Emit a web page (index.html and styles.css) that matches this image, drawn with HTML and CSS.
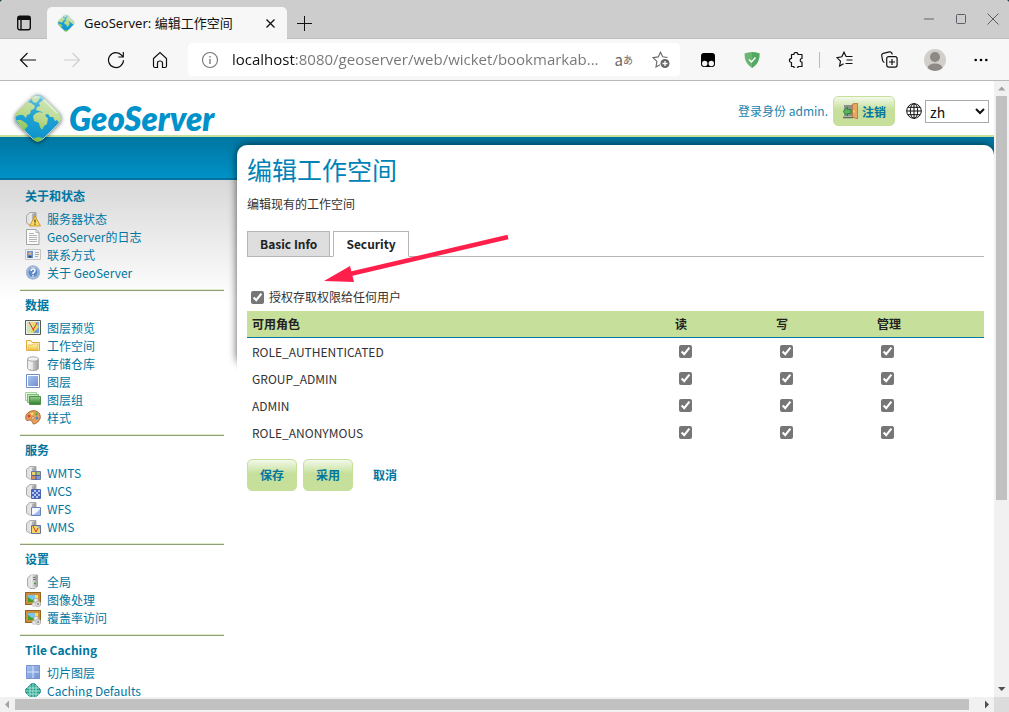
FILE: index.html
```html
<!DOCTYPE html>
<html lang="zh">
<head>
<meta charset="utf-8">
<title>GeoServer: 编辑工作空间</title>
<link rel="stylesheet" href="styles.css">
</head>
<body>
<svg class="defs" aria-hidden="true">
  <defs>
    <linearGradient id="gGlobe" x1="0" y1="0" x2="0" y2="1"><stop offset="0" stop-color="#6cc2e2"/><stop offset=".4" stop-color="#22a2d5"/><stop offset="1" stop-color="#0b93cb"/></linearGradient>
    <linearGradient id="gLand" gradientUnits="userSpaceOnUse" x1="30" y1="4" x2="16" y2="46"><stop offset="0" stop-color="#cfe6bd"/><stop offset=".5" stop-color="#b9d98a"/><stop offset="1" stop-color="#76bd3f"/></linearGradient>
    <linearGradient id="gGray" x1="0" y1="0" x2="1" y2="0"><stop offset="0" stop-color="#f4f4f4"/><stop offset="1" stop-color="#9a9a9a"/></linearGradient>
    <linearGradient id="gBlue" x1="0" y1="0" x2="1" y2="1"><stop offset="0" stop-color="#a9c2ee"/><stop offset="1" stop-color="#6f90d2"/></linearGradient>
    <linearGradient id="gGreen" x1="0" y1="0" x2="0" y2="1"><stop offset="0" stop-color="#9bd08f"/><stop offset="1" stop-color="#2d7f2b"/></linearGradient>
    <linearGradient id="gFolder" x1="0" y1="0" x2="0" y2="1"><stop offset="0" stop-color="#fff3b0"/><stop offset="1" stop-color="#f0c336"/></linearGradient>
  </defs>
  <symbol id="globe" viewBox="0 0 50 50">
    <path d="M20 4q5-4 10 0L46 20q4 5 0 10L30 46q-5 4-10 0L4 30q-4-5 0-10z" fill="url(#gGlobe)" stroke="#a9cfd2" stroke-width="1"/>
    <path d="M3 20L14 9l4 1 4 3-1 3-3 1-1 4-3 1-1 3-3-3-4 0-4 2zM18 5l4-2 5 1-1 3-3 3-3-1zM3 27l5 0 5 3 2 3-3 3-1 2zM20 23l3-3 4-1 5 2 1 3 2 1-1 6-3 2-2 4-2-3-1-4-5-2zM23 17l1-3 3-1-1-3 4-3 2-1 14 14q2 3 2 6l-2 4-2-3-2 1-2-4-3 0-2-3-4 1-2-3-3-1zM19 46l6-2 5 1-3 3-3 1z" fill="url(#gLand)"/>
    <path d="M21 5q4-3 8 0l15 15" fill="none" stroke="#fff" stroke-opacity=".5" stroke-width="1.500"/>
  </symbol>
  <symbol id="server" viewBox="0 0 16 16">
    <path d="M1.500 4.500L5 1.500h6v9.500l-3 3H4.500l-3-2z" fill="#e2e2e2" stroke="#999" stroke-width=".8"/>
    <path d="M5.500 2H11v12H5.500z" fill="url(#gGray)"/><path d="M7 4h3M7 6h3M7 8h3" stroke="#888" stroke-width=".8"/>
  </symbol>
  <symbol id="image" viewBox="0 0 16 16">
    <path d="M0 0h16v13H0z" fill="#c98f3f"/><path d="M.5.5h15v12H.5z" fill="none" stroke="#94611f"/><path d="M3 3h10v7H3z" fill="#79c4ed"/><path d="M3 10V5l4 3 2-1 4 3z" fill="#43a22d"/><path d="M10 3h3v3h-3z" fill="#ffdf4a"/>
    <circle cx="11" cy="8.500" r="2.300" fill="#e6e6e6" stroke="#aaa" stroke-width=".7"/><circle cx="13" cy="12" r="2.800" fill="#ddd" stroke="#aaa" stroke-width=".7"/><circle cx="9" cy="12.500" r="2" fill="#e6e6e6" stroke="#bbb" stroke-width=".6"/><circle cx="13" cy="12" r="1" fill="#888"/>
  </symbol>
</svg>

<div class="window">
  <header class="titlebar">
    <button class="icon-btn tabs-btn" aria-label="Tab actions"><svg width="16" height="16" viewBox="0 0 16 16"><path d="M1.700 4V3.200A2 2 0 0 1 3.700 1.200h8.600a2 2 0 0 1 2 2v9.600a2 2 0 0 1-2 2H3.700a2 2 0 0 1-2-2z M5 4v11" fill="none" stroke="#111" stroke-width="1.400"/><path d="M2 1.500h12v3.500H2z" fill="#111"/></svg></button>
    <div class="browser-tab">
      <svg width="18" height="18"><use href="#globe"/></svg>
      <span class="browser-tab-title">GeoServer: 编辑工作空间</span>
      <button class="icon-btn" aria-label="Close tab"><svg width="11" height="11" viewBox="0 0 11 11"><path d="M1.500 1.500l8 8m0-8l-8 8" stroke="#111" stroke-width="1.300"/></svg></button>
    </div>
    <button class="icon-btn new-tab" aria-label="New tab"><svg width="15" height="15" viewBox="0 0 15 15"><path d="M7.500 0v15M0 7.500h15" stroke="#111"/></svg></button>
    <div class="window-controls">
      <button class="icon-btn" aria-label="Minimize"><svg width="12" height="12" viewBox="0 0 12 12"><path d="M1 6h10" stroke="#96989c" stroke-width="2"/></svg></button>
      <button class="icon-btn" aria-label="Maximize"><svg width="12" height="12" viewBox="0 0 12 12"><rect x="1.500" y="1.500" width="9" height="9" rx="1" fill="none" stroke="#5c5e66"/></svg></button>
      <button class="icon-btn" aria-label="Close"><svg width="12" height="12" viewBox="0 0 12 12"><path d="M.5.5l11 11m0-11l-11 11" stroke="#5c5e66"/></svg></button>
    </div>
  </header>

  <nav class="toolbar">
    <div class="nav-buttons">
      <button class="icon-btn" aria-label="Back"><svg width="18" height="18" viewBox="0 0 18 18"><path d="M17 9H1.500M8.500 2L1.500 9l7 7" fill="none" stroke="#111" stroke-width="1.200"/></svg></button>
      <button class="icon-btn" aria-label="Forward"><svg width="18" height="18" viewBox="0 0 18 18"><path d="M1 9h15.500M9.500 2l7 7-7 7" fill="none" stroke="#cfcfcf" stroke-width="1.200"/></svg></button>
      <button class="icon-btn" aria-label="Reload"><svg width="18" height="18" viewBox="0 0 18 18"><path d="M16.500 9.300A7.500 7.500 0 1 1 14.800 4.300L16 6M16.300 1v5h-5" fill="none" stroke="#111" stroke-width="1.200"/></svg></button>
      <button class="icon-btn" aria-label="Home"><svg width="18" height="18" viewBox="0 0 18 18"><path d="M2.500 7.500L9 1.500l6.500 6V15q0 1.500-1.500 1.500h-2.500V12q0-2-2.500-2t-2.500 2v4.500H4Q2.500 16.500 2.500 15z" fill="none" stroke="#111" stroke-width="1.200"/></svg></button>
    </div>
    <div class="address">
      <svg width="18" height="18" viewBox="0 0 18 18"><circle cx="9" cy="9" r="7.500" fill="none" stroke="#737373" stroke-width="1.100"/><path d="M9 8v5M9 5v1.400" stroke="#737373" stroke-width="1.300"/></svg>
      <input class="url" type="text" aria-label="Address" value="localhost:8080/geoserver/web/wicket/bookmarkab...">
      <button class="icon-btn translate" aria-label="Translate"><span class="translate-a">a</span><span class="translate-b">あ</span></button>
      <button class="icon-btn" aria-label="Add favorite"><svg width="18" height="18" viewBox="0 0 18 18"><path d="M15.500 6.500l-4.800-.7L8.500 1.200 6.200 5.900 1 6.700l3.900 3.700L4 16l4-2.200" fill="none" stroke="#666" stroke-width="1.100"/><circle cx="13" cy="12.500" r="4.500" fill="#666"/><path d="M13 10v5M10.500 12.500h5" stroke="#fff" stroke-width="1.300"/></svg></button>
    </div>
    <div class="extensions">
      <button class="icon-btn" aria-label="Tampermonkey"><svg width="16" height="16" viewBox="0 0 16 16"><rect x="1" y="1" width="14" height="14" rx="3" fill="#000"/><circle cx="4.700" cy="11.500" r="2.700" fill="#f5f5f5"/><circle cx="11.300" cy="11.500" r="2.700" fill="#f5f5f5"/></svg></button>
      <button class="icon-btn" aria-label="AdGuard"><svg width="16" height="16" viewBox="0 0 16 16"><path d="M8 0q4 0 7.500 1.500Q16 11 8 16 0 11 .5 1.500 4 0 8 0z" fill="#6ab574"/><path d="M8 0q4 0 7.500 1.500Q16 11 8 16z" fill="#55a861"/><path d="M5 7.500l2.500 2.500L11.500 5.500" fill="none" stroke="#fff" stroke-width="1.400"/></svg></button>
      <button class="icon-btn" aria-label="Extensions"><svg width="16" height="16" viewBox="0 0 16 16"><path d="M3.500 2.500h2.300a2.100 2.100 0 0 1 4.200 0h4v4a1.800 1.800 0 1 0 0 3.600v4.400h-4a2.100 2.100 0 0 1-4.200 0H3.500v-4a2.100 2.100 0 0 1 0-4.200z" fill="none" stroke="#111" stroke-width="1.200" stroke-linejoin="round"/></svg></button>
      <span class="divider"></span>
      <button class="icon-btn" aria-label="Favorites"><svg width="17" height="17" viewBox="0 0 17 17"><path d="M10 5.500L8 1.200 5.800 5.800.9 6.600l3.600 3.500L3.600 15l4-2.200M10 5.500h6.500M10.500 9h6M9.500 12.500h7" fill="none" stroke="#111" stroke-width="1.200"/></svg></button>
      <button class="icon-btn" aria-label="Collections"><svg width="17" height="17" viewBox="0 0 17 17"><rect x="5.700" y="5.700" width="10.400" height="10.400" rx="2" fill="none" stroke="#111" stroke-width="1.200"/><path d="M11 8v6M8 11h6M3.500 11.500Q1.800 11 1.500 9L.7 4.500q-.2-1.700 1.500-2.200L8.500.8q1.700-.2 2.300 1.200l.5 1.500" fill="none" stroke="#111" stroke-width="1.200"/></svg></button>
      <button class="icon-btn profile" aria-label="Profile"><svg width="22" height="22" viewBox="0 0 22 22"><circle cx="11" cy="11" r="11" fill="#d2cfcb"/><circle cx="11" cy="8" r="5" fill="#8d8986"/><path d="M3.500 19q1-4.500 7.500-4.500t7.500 4.500A11 11 0 0 1 3.500 19z" fill="#8d8986"/></svg></button>
      <button class="icon-btn" aria-label="Menu"><svg width="14" height="4" viewBox="0 0 14 4"><circle cx="1.700" cy="2" r="1.300"/><circle cx="7" cy="2" r="1.300"/><circle cx="12.300" cy="2" r="1.300"/></svg></button>
    </div>
  </nav>

  <div class="viewport">
    <div class="page">
      <div class="page-header">
        <a class="logo" href="#"><svg class="logo-globe" width="50" height="50"><use href="#globe"/></svg><span class="logo-text">GeoServer</span></a>
        <div class="session">
          <span class="login-as">登录身份 admin.</span>
          <button class="btn logout"><svg width="16" height="16" viewBox="0 0 16 16"><path d="M2 2h8v11H2z" fill="#8b8f8f"/><path d="M1 14.500h10" stroke="#666" stroke-width="1.500"/><path d="M10.500 1l5-1v16l-5-2z" fill="#e6a765" stroke="#b06f35" stroke-width=".8"/><path d="M12 7.500v2" stroke="#ffe169" stroke-width="1.500"/><path d="M9 6.500v4H5.500v2.300L1 8.500l4.500-4.300v2.300z" fill="#58b35a" stroke="#247c32" stroke-width=".8"/></svg>注销</button>
          <svg class="lang-icon" width="16" height="16" viewBox="0 0 16 16"><g fill="none" stroke="#111" stroke-width="1"><circle cx="8" cy="8" r="7.300"/><ellipse cx="8" cy="8" rx="3.700" ry="7.300"/><path d="M8 .7v14.600M.7 8h14.600M2 4.300h12M2 11.700h12"/></g></svg>
          <select class="lang" aria-label="Language"><option>zh</option></select>
        </div>
      </div>
      <div class="page-body">
        <aside class="sidebar">
          <section class="group"><h3>关于和状态</h3><ul>
            <li><a href="#"><svg width="16" height="16" viewBox="0 0 16 16"><use href="#server"/><path d="M10 5l5.500 10h-11z" fill="#fbd75b" stroke="#c98d14" stroke-width=".8"/><path d="M10 8.500v3M10 12.500v1.200" stroke="#333" stroke-width="1.200"/></svg>服务器状态</a></li>
            <li><a href="#"><svg width="16" height="16" viewBox="0 0 16 16"><path d="M1.500.5h9.500l3 3v12H1.500z" fill="#fafafa" stroke="#a5a5a5"/><path d="M11 .5v3h3M4 4.500h5M4 6.500h8M4 8.500h8M4 10.500h8M4 12.500h8" fill="none" stroke="#b5b5b5"/></svg>GeoServer的日志</a></li>
            <li><a href="#"><svg width="16" height="16" viewBox="0 0 16 16"><path d="M.5 2.500h15v10H.5z" fill="#f2f2f2" stroke="#c5c5c5"/><path d="M2 4h6v7H2z" fill="#6b95cc"/><circle cx="5" cy="6.500" r="1.500" fill="#e9b37c"/><path d="M3 10.500q2-4 4 0z" fill="#25406b"/><path d="M10 5.500h4M10 7.500h4M10 9.500h3" stroke="#aaa"/></svg>联系方式</a></li>
            <li><a href="#"><svg width="16" height="16" viewBox="0 0 16 16"><circle cx="8" cy="7.500" r="6.600" fill="#5f8ac6" stroke="#a7b9d4" stroke-width="1.200"/><circle cx="8" cy="7.500" r="5.200" fill="none" stroke="#dce8f7" stroke-width=".8"/><path d="M6 6q0-2 2-2t2 1.700Q10 7 8 8v1M8 10v1.500" fill="none" stroke="#fff" stroke-width="1.400"/></svg>关于 GeoServer</a></li>
          </ul></section>
          <section class="group"><h3>数据</h3><ul>
            <li><a href="#"><svg width="16" height="16" viewBox="0 0 16 16"><path d="M.5.5h15v14H.5z" fill="#eee" stroke="#555b50"/><path d="M2 2h12v11H2z" fill="#f0d865"/><path d="M2 2h4l2 4-3 7H2z" fill="#cde4ae"/><path d="M10 2h4v5z" fill="#7cb0dc"/><path d="M8 13l6-6v6z" fill="#6aa0d8"/><path d="M4 2l5 9M8 10l4-7" fill="none" stroke="#d8372e" stroke-width="1"/></svg>图层预览</a></li>
            <li><a href="#"><svg width="16" height="16" viewBox="0 0 16 16"><path d="M1.500 12.500v-10H6l1 2h7.500v8z" fill="#fff7cf" stroke="#e0a73c"/><path d="M3 12V7h4l1-1h5v6z" fill="url(#gFolder)" stroke="#e8bb55" stroke-width=".8"/></svg>工作空间</a></li>
            <li><a href="#"><svg width="16" height="16" viewBox="0 0 16 16"><path d="M2.500 3v9.500q0 2 5.500 2t5.500-2V3" fill="url(#gGray)" stroke="#aaa"/><path d="M5 5v8M7 5v9" stroke="#fff"/><ellipse cx="8" cy="3" rx="5.500" ry="2.200" fill="#f2f2f2" stroke="#aaa"/></svg>存储仓库</a></li>
            <li><a href="#"><svg width="16" height="16" viewBox="0 0 16 16"><path d="M1.500.5h13v13h-13z" fill="#fff" stroke="#6f8fca"/><path d="M3 2h10v10H3z" fill="url(#gBlue)"/></svg>图层</a></li>
            <li><a href="#"><svg width="16" height="16" viewBox="0 0 16 16"><path d="M.5.500h11v8H.5z" fill="#e4f3df" stroke="#a3d19e"/><path d="M2.500 2.500h11v8h-11z" fill="#bfe1b8" stroke="#7dbb77"/><path d="M4.500 4.500h11v8h-11z" fill="url(#gGreen)" stroke="#4c9349"/></svg>图层组</a></li>
            <li><a href="#"><svg width="16" height="16" viewBox="0 0 16 16"><path d="M1 9.500Q-.5 4 5 1.500t9.500 2Q17 9 12 12.500q-4 3-4.500 0T4 10q-2.500 1.500-3-.5z" fill="#e2a15f" stroke="#aa6328" stroke-width=".9"/><circle cx="4" cy="6" r="1.500" fill="#e53e31"/><circle cx="7" cy="3.700" r="1.300" fill="#f4e65c"/><circle cx="11.500" cy="4" r="1.500" fill="#51b94a"/><circle cx="12" cy="8" r="1.500" fill="#4d86d6"/><circle cx="8" cy="8" r="1.300" fill="#fff" stroke="#aa6328" stroke-width=".7"/></svg>样式</a></li>
          </ul></section>
          <section class="group"><h3>服务</h3><ul>
            <li><a href="#"><svg width="16" height="16" viewBox="0 0 16 16"><use href="#server"/><path d="M6.500 6.500h9v8h-9z" fill="#fff" stroke="#6b78a8"/><path d="M7 7h4v3H7z" fill="#ecd26a"/><path d="M11 7h4v3h-4z" fill="#a4c26a"/><path d="M7 10h4v4H7z" fill="#d98a5b"/><path d="M11 10h4v4h-4z" fill="#7d9ad6"/><path d="M11 7v8M7 10.500h8" stroke="#4c5a95"/></svg>WMTS</a></li>
            <li><a href="#"><svg width="16" height="16" viewBox="0 0 16 16"><use href="#server"/><path d="M6.500 6.500h9v9h-9z" fill="#b3c4ee" stroke="#4b64b2"/><path d="M7 7h2v2H7zM11 7h2v2h-2zM9 9h2v2H9zM13 9h2v2h-2zM7 11h2v2H7zM11 11h2v2h-2zM9 13h2v2H9zM13 13h2v2h-2z" fill="#4764bb"/></svg>WCS</a></li>
            <li><a href="#"><svg width="16" height="16" viewBox="0 0 16 16"><use href="#server"/><path d="M6.500 6.500h9v8h-9z" fill="#f5f8ff" stroke="#6780c2"/><path d="M7 14q4-1 8-6v6z" fill="#9db8ea"/></svg>WFS</a></li>
            <li><a href="#"><svg width="16" height="16" viewBox="0 0 16 16"><use href="#server"/><path d="M6.500 6.500h9v8h-9z" fill="#f2da68" stroke="#6b6f9b"/><path d="M12 7h3v3z" fill="#7cb0dc"/><path d="M8 7l3 6 2-4" fill="none" stroke="#d8372e"/></svg>WMS</a></li>
          </ul></section>
          <section class="group"><h3>设置</h3><ul>
            <li><a href="#"><svg width="16" height="16" viewBox="0 0 16 16"><path d="M2.500 4L6 1h6.500v11L10 14.500H5L2.500 12z" fill="#e4e4e4" stroke="#999" stroke-width=".8"/><path d="M6 1h6.500v12H6z" fill="url(#gGray)"/><path d="M8 3.500h3M8 5.500h3" stroke="#777"/><path d="M9 9.500h2" stroke="#39a23e" stroke-width="1.500"/></svg>全局</a></li>
            <li><a href="#"><svg width="16" height="16"><use href="#image"/></svg>图像处理</a></li>
            <li><a href="#"><svg width="16" height="16"><use href="#image"/></svg>覆盖率访问</a></li>
          </ul></section>
          <section class="group"><h3>Tile Caching</h3><ul>
            <li><a href="#"><svg width="16" height="16" viewBox="0 0 16 16"><path d="M1 0h14v14H1z" fill="url(#gBlue)"/><path d="M8 0v14M1 7h14" stroke="#dce6fa" stroke-width="1"/><path d="M1.500.5h13v13h-13z" fill="none" stroke="#7896d6"/></svg>切片图层</a></li>
            <li><a href="#"><svg width="16" height="16" viewBox="0 0 16 16"><path d="M6 1q2-1.500 4 0l5 5q1.500 2 0 4l-5 5q-2 1.500-4 0l-5-5q-1.500-2 0-4z" fill="#23a394" stroke="#168a83" stroke-width=".8"/><path d="M5 2v12M8 .5v15M11 2v12M2 5h12M.5 8h15M2 11h12" stroke="#c9ecd9" stroke-width=".8"/></svg>Caching Defaults</a></li>
          </ul></section>
        </aside>

        <main class="content">
          <h1>编辑工作空间</h1>
          <p class="description">编辑现有的工作空间</p>
          <div class="tabs" role="tablist">
            <button class="tab" role="tab">Basic Info</button>
            <button class="tab tab-active" role="tab" aria-selected="true">Security</button>
          </div>
          <label class="grant"><input class="check" type="checkbox" checked><span>授权存取权限给任何用户</span></label>
          <table class="roles">
            <thead><tr><th>可用角色</th><th class="col-access">读</th><th class="col-access">写</th><th class="col-admin">管理</th></tr></thead>
            <tbody>
              <tr><td>ROLE_AUTHENTICATED</td><td><input class="check" type="checkbox" checked aria-label="ROLE_AUTHENTICATED 读"></td><td><input class="check" type="checkbox" checked aria-label="ROLE_AUTHENTICATED 写"></td><td><input class="check" type="checkbox" checked aria-label="ROLE_AUTHENTICATED 管理"></td></tr>
              <tr><td>GROUP_ADMIN</td><td><input class="check" type="checkbox" checked aria-label="GROUP_ADMIN 读"></td><td><input class="check" type="checkbox" checked aria-label="GROUP_ADMIN 写"></td><td><input class="check" type="checkbox" checked aria-label="GROUP_ADMIN 管理"></td></tr>
              <tr><td>ADMIN</td><td><input class="check" type="checkbox" checked aria-label="ADMIN 读"></td><td><input class="check" type="checkbox" checked aria-label="ADMIN 写"></td><td><input class="check" type="checkbox" checked aria-label="ADMIN 管理"></td></tr>
              <tr><td>ROLE_ANONYMOUS</td><td><input class="check" type="checkbox" checked aria-label="ROLE_ANONYMOUS 读"></td><td><input class="check" type="checkbox" checked aria-label="ROLE_ANONYMOUS 写"></td><td><input class="check" type="checkbox" checked aria-label="ROLE_ANONYMOUS 管理"></td></tr>
            </tbody>
          </table>
          <div class="actions">
            <button class="btn">保存</button>
            <button class="btn">采用</button>
            <a class="cancel" href="#">取消</a>
          </div>
          <svg class="arrow" width="190" height="50" viewBox="0 0 190 50"><path d="M186 3L28 40" stroke="#ff1f4b" stroke-width="4.500"/><path d="M2 47l26-15 4 16z" fill="#ff1f4b"/></svg>
        </main>
      </div>
    </div>
    <div class="scroll-v">
      <svg width="15" height="15" viewBox="0 0 15 15"><path d="M4 9.500h7.500L7.700 5.500z" fill="#a3a3a3"/></svg>
      <div class="track"><div class="thumb"></div></div>
      <svg width="15" height="15" viewBox="0 0 15 15"><path d="M4 5h7.500L7.700 9z" fill="#505050"/></svg>
    </div>
    <div class="scroll-h">
      <svg width="15" height="15" viewBox="0 0 15 15"><path d="M9 3.500v8L5 7.500z" fill="#a3a3a3"/></svg>
      <div class="track"><div class="thumb"></div></div>
      <svg width="15" height="15" viewBox="0 0 15 15"><path d="M6 3.500v8l4-4z" fill="#505050"/></svg>
    </div>
    <div class="scroll-corner"></div>
  </div>
</div>
</body>
</html>
```

FILE: styles.css
```css
* { box-sizing: border-box; }

body {
  margin: 0;
  background: #1f4350;
  font-family: "Noto Sans CJK SC", "Noto Sans", sans-serif;
  font-size: 12px;
  line-height: 18px;
  color: #333;
}

svg { display: block; flex: none; }
.defs { position: absolute; width: 0; height: 0; }
a { color: #0076a1; text-decoration: none; }
h1, h3, p, ul { margin: 0; padding: 0; }
button { font-family: inherit; }

.window {
  display: flex;
  flex-direction: column;
  height: 100vh;
  overflow: hidden;
  border-radius: 4px 4px 0 0;
  background: #fff;
}

.icon-btn {
  display: flex;
  align-items: center;
  justify-content: center;
  padding: 0;
  border: 0;
  background: none;
  color: #666;
}

/* browser title bar */
.titlebar {
  display: flex;
  flex: none;
  align-items: center;
  height: 39px;
  background: #cdcdcd;
  border-bottom: 1px solid #bdbdbd;
}
.tabs-btn { padding: 8px 15px 0 16px; }
.browser-tab {
  display: flex;
  align-items: center;
  align-self: flex-end;
  gap: 9px;
  width: 240px;
  height: 32px;
  margin-bottom: -1px;
  padding: 0 11px 0 10px;
  border-radius: 5px 5px 0 0;
  background: #f7f7f7;
}
.browser-tab-title {
  flex: 1;
  font-family: "Noto Sans", "Noto Sans CJK SC", sans-serif;
  font-size: 13px;
  color: #111;
}
.new-tab { padding: 8px 10px 0; }
.window-controls {
  display: flex;
  gap: 20px;
  margin-left: auto;
  padding-right: 10px;
}

/* browser toolbar */
.toolbar {
  display: flex;
  flex: none;
  align-items: center;
  height: 42px;
  background: #f7f7f7;
  border-bottom: 1px solid #b9b9b9;
}
.nav-buttons { display: flex; gap: 26px; padding: 0 19px; }
.address {
  display: flex;
  flex: 1;
  align-items: center;
  height: 33px;
  gap: 13px;
  padding: 0 10px 0 13px;
  border-radius: 4px;
  background: #fff;
}
.url {
  flex: 1;
  min-width: 0;
  margin-right: -8px;
  padding: 0 0 2px;
  border: 0;
  font-family: "Open Sans", "Noto Sans", sans-serif;
  font-size: 15px;
  color: transparent;
  background: linear-gradient(to right, #111 63px, #757575 63px);
  background-clip: text;
}
.translate { margin-right: 6px; }
.translate-a { font-family: "Noto Sans CJK JP", sans-serif; font-size: 15px; }
.translate-b { font-family: "Noto Sans CJK JP", sans-serif; font-size: 10px; }
.extensions { display: flex; align-items: center; gap: 28px; padding: 0 21px 0 20px; }
.divider { width: 1px; height: 16px; margin: 0 -12px 0 -13px; background: #bbb; }
.profile { margin-left: -2px; }

/* scrolled page area */
.viewport {
  display: grid;
  flex: 1;
  min-height: 0;
  grid-template: minmax(0, 1fr) 15px / minmax(0, 1fr) 15px;
}
.page {
  display: flex;
  flex-direction: column;
  overflow: hidden;
  background: #fff;
}
.scroll-v, .scroll-h { display: flex; background: #f1f1f1; }
.scroll-v { flex-direction: column; }
.track { flex: 1; }
.thumb { background: #c1c1c1; }
.scroll-v .thumb { height: 69%; margin: 0 2px; }
.scroll-h .track { display: flex; }
.scroll-h .thumb { width: 99%; margin: 2px 0; }
.scroll-corner { background: #dcdcdc; }

/* GeoServer header */
.page-header {
  position: relative;
  z-index: 1;
  display: flex;
  flex: none;
  align-items: center;
  justify-content: space-between;
  height: 56px;
  padding: 6px 5px 0 13px;
  border-bottom: 2px solid #c6e09b;
}
.logo { display: flex; align-items: center; gap: 6px; }
.logo-globe { margin-top: 14px; filter: drop-shadow(0 1px 2px #0008); }
.logo-text {
  padding-top: 14px;
  font-family: Lato, sans-serif;
  font-size: 33px;
  font-weight: 800;
  font-style: italic;
  color: #0092ca;
}
.session { display: flex; align-items: center; }
.login-as { margin-right: 5px; color: #1a84ae; }
.lang-icon { margin: 0 3px 0 11px; }
.lang {
  width: 64px;
  height: 23px;
  padding-bottom: 2px;
  border: 1px solid #aaa;
  font-family: "Noto Sans CJK SC", sans-serif;
  font-size: 14px;
  background-color: #fff;
  color: #111;
}

.btn {
  height: 32px;
  padding: 0 12px 2px;
  border: 1px solid #c6e09b;
  border-radius: 5px;
  background: linear-gradient(#f3f9ea, #c6e09b 45%);
  font-size: 12px;
  font-weight: 700;
  color: #0076a1;
}
.logout {
  display: flex;
  align-items: center;
  gap: 4px;
  height: 30px;
  padding: 0 8px;
}

.page-body {
  position: relative;
  z-index: 0;
  display: flex;
  flex: 1;
  background:
    linear-gradient(#0076a1, #0092c7) 0 0 / 100% 41px no-repeat,
    linear-gradient(#0073a0, #0073a0) 0 41px / 100% 2px no-repeat,
    linear-gradient(#d8d8d8, #fff) 0 43px / 100% 120px no-repeat;
}

/* navigation */
.sidebar { flex: none; width: 237px; padding: 45px 13px 0 20px; }
.group { padding: 5px 5px 8px; border-bottom: 1px solid #8f9f7c; box-shadow: inset 0 -1px #dfecc8; }
.group h3 { margin-bottom: 5px; font-size: 12px; line-height: 18px; color: #0076a1; }
.group ul { list-style: none; }
.group a { display: flex; align-items: center; gap: 6px; height: 18px; white-space: nowrap; }

/* main panel */
.content {
  position: relative;
  flex: 1;
  min-width: 0;
  margin-top: 8px;
  padding: 6px 10px;
  border-radius: 10px 10px 0 0;
  background: #fff;
}
.content::before {
  content: "";
  position: absolute;
  z-index: -1;
  inset: 0 0 auto 0;
  height: 220px;
  border-radius: 10px;
  box-shadow: 0 0 8px #000a;
}
.content h1 { font-size: 25px; font-weight: 400; line-height: 36px; color: #0082b6; }
.description { margin-top: 8px; }

.tabs {
  display: flex;
  gap: 3px;
  margin-top: 18px;
  border-bottom: 1px solid #b5b5b5;
}
.tab {
  height: 26px;
  margin-bottom: -1px;
  padding: 0 12px 2px;
  border: 1px solid #b5b5b5;
  background: #dedede;
  font-size: 12px;
  font-weight: 700;
  color: #222;
}
.tab-active { border-bottom-color: #fff; background: #fff; }

.check { display: block; width: 13px; height: 13px; margin: 0 4px; accent-color: #767676; }
.grant { display: flex; align-items: center; width: fit-content; margin-top: 31px; gap: 1px; }

.roles {
  width: 100%;
  margin-top: 5px;
  border-collapse: separate;
  border-spacing: 0;
  table-layout: fixed;
}
.roles th {
  height: 27px;
  padding: 0 5px;
  border-bottom: 1px solid #0076a1;
  background: #c6e09b;
  text-align: left;
  color: #222;
}
.roles td { height: 27px; padding: 0 5px; }
.col-access { width: 101px; }
.col-admin { width: 112px; }

.actions { display: flex; align-items: center; gap: 6px; margin-top: 13px; }
.cancel { padding: 0 14px; font-weight: 700; }

.arrow { position: absolute; left: 85px; top: 89px; }
```
